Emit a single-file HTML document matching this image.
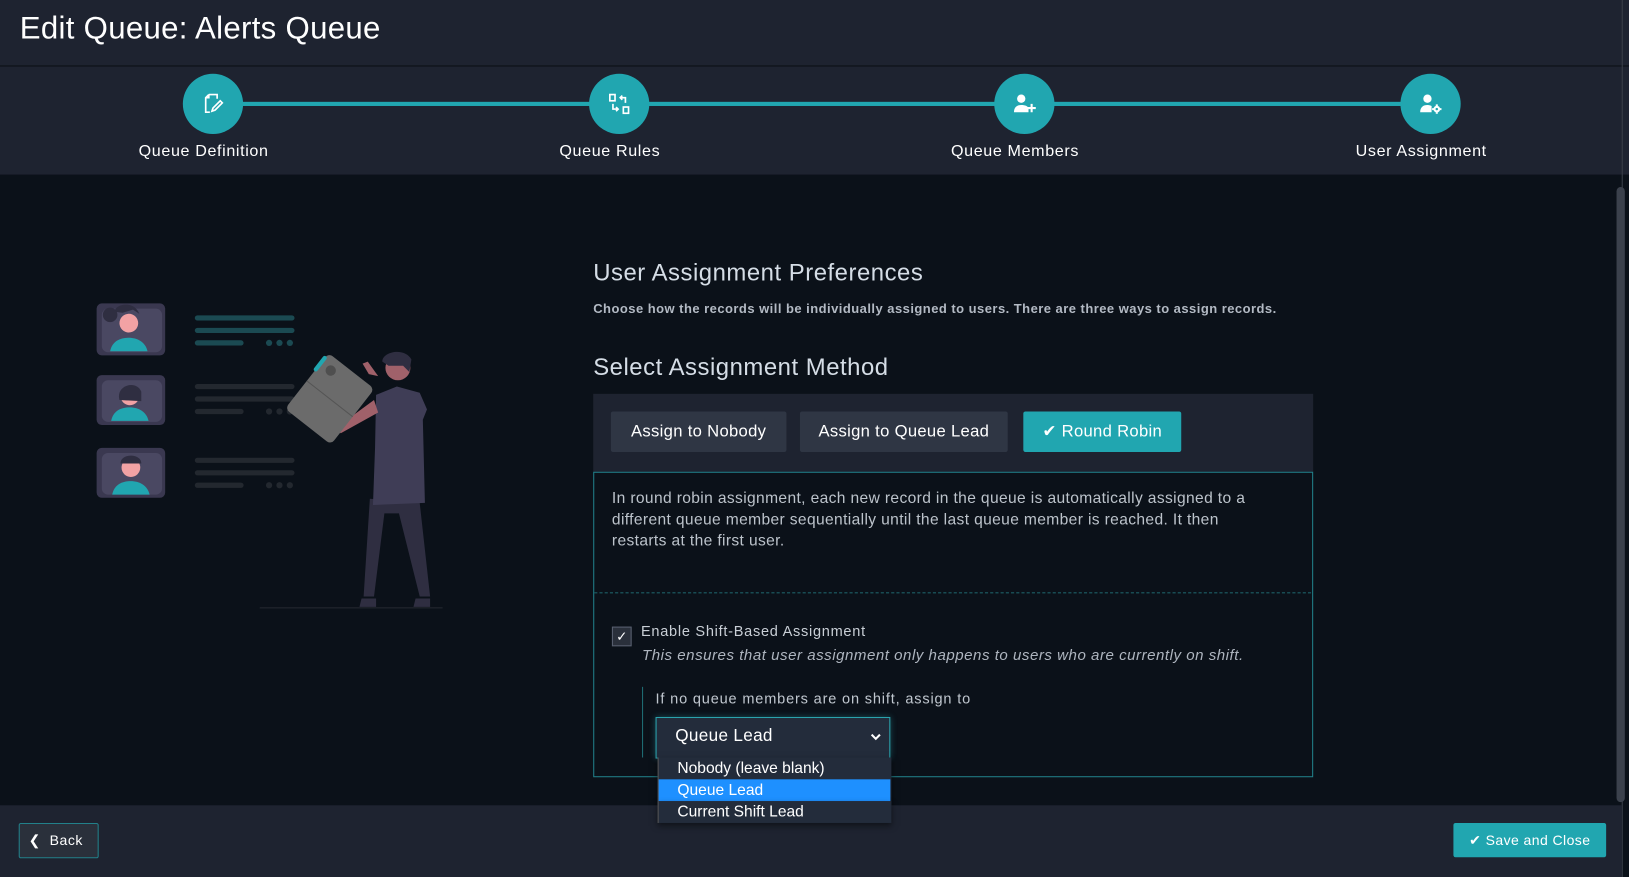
<!DOCTYPE html>
<html><head><meta charset="utf-8"><style>
html,body{margin:0;padding:0;background:#0b1119;overflow:hidden;}
body{width:1629px;height:877px;font-family:"Liberation Sans",sans-serif;}
#w{position:absolute;left:0;top:0;width:1568px;height:844px;transform:scale(1.0389,1.0391);transform-origin:0 0;background:#0b1119;}
.a{position:absolute;white-space:nowrap;}
.circ{position:absolute;width:58px;height:58px;border-radius:50%;background:#21a6b0;top:71px;}
.circ svg{position:absolute;left:17px;top:17px;}
.lbl{position:absolute;top:137px;font-size:15.5px;letter-spacing:.6px;color:#fff;transform:translateX(-50%);}
.btn{position:absolute;top:396px;height:39px;line-height:39px;background:#2f3644;color:#fff;font-size:16px;letter-spacing:.3px;text-align:center;border-radius:2px;}
</style></head><body><div id="w">
<div class="a" style="left:0;top:0;width:1568px;height:63px;background:#1e2330;border-bottom:1px solid #0b0e14;"></div>
<div class="a" style="left:19px;top:11px;font-size:30px;letter-spacing:.3px;color:#fff;">Edit Queue: Alerts Queue</div>
<div class="a" style="left:0;top:64px;width:1568px;height:104px;background:#1e2330;"></div>
<div class="a" style="left:205px;top:98px;width:1172px;height:4px;background:#21a6b0;"></div>
<div class="circ" style="left:176px"><svg width="24" height="24" viewBox="0 0 24 24" fill="none" stroke="#fff" stroke-width="1.6"><path d="M8 3h8v4M8 3L5 6v14h4M5 6h3V3"/><path d="M11 19l1-3 7-7 2 2-7 7z"/></svg></div>
<div class="circ" style="left:567px"><svg width="24" height="24" viewBox="0 0 24 24" fill="none" stroke="#fff" stroke-width="1.6"><rect x="3" y="3" width="5" height="6"/><rect x="16" y="15" width="5" height="6"/><path d="M18 11V6h-5M15 4l-2 2 2 2M6 12v5h5M9 15l2 2-2 2"/></svg></div>
<div class="circ" style="left:957px"><svg width="24" height="24" viewBox="0 0 24 24" fill="#fff"><circle cx="9" cy="7" r="4"/><path d="M2 20c0-5 3-7 7-7s6 1 7 3v4z"/><path d="M18 12h2v3h3v2h-3v3h-2v-3h-3v-2h3z"/></svg></div>
<div class="circ" style="left:1348px"><svg width="24" height="24" viewBox="0 0 24 24" fill="#fff"><circle cx="9" cy="7" r="4"/><path d="M2 20c0-5 3-7 7-7 2 0 3 .5 4 1v6z"/><circle cx="18" cy="17" r="3.2"/><circle cx="18" cy="17" r="1.2" fill="#21a6b0"/><path d="M17 12.5h2v1.5h-2zM17 20h2v1.5h-2zM13.5 16h1.5v2h-1.5zM21 16h1.5v2H21z"/></svg></div>
<div class="lbl" style="left:196px">Queue Definition</div>
<div class="lbl" style="left:587px">Queue Rules</div>
<div class="lbl" style="left:977px">Queue Members</div>
<div class="lbl" style="left:1368px">User Assignment</div>

<div class="a" style="left:1561px;top:0;width:1px;height:844px;background:#3a3f49;"></div>
<div class="a" style="left:1556px;top:180px;width:8px;height:592px;background:#3b414c;border-radius:4px;"></div>

<svg class="a" style="left:0;top:168px" width="560" height="607" viewBox="0 168 560 607">
<g>
<rect x="93" y="292" width="66" height="50" rx="5" fill="#3a3850"/><rect x="98" y="297" width="58" height="42" rx="6" fill="#4a4862"/>
<circle cx="124" cy="311" r="9" fill="#f2a2a4"/><path d="M110 300c2-9 20-10 24 2l-6-4-10 3z" fill="#2f2e41"/><circle cx="106" cy="303" r="7" fill="#2f2e41"/><path d="M106 338c2-10 10-13 18-13s16 4 18 13z" fill="#21a6b0"/>
<rect x="93" y="361" width="66" height="48" rx="5" fill="#3a3850"/><rect x="98" y="366" width="58" height="40" rx="6" fill="#4a4862"/>
<circle cx="125" cy="381" r="9" fill="#f2a2a4"/><path d="M115 385c-4-14 16-20 21-8v9z" fill="#2f2e41"/><path d="M107 405c2-10 10-13 18-13s16 4 18 13z" fill="#21a6b0"/>
<rect x="93" y="431" width="66" height="48" rx="5" fill="#3a3850"/><rect x="98" y="436" width="58" height="40" rx="6" fill="#4a4862"/>
<circle cx="126" cy="450" r="9" fill="#f2a2a4"/><path d="M116 446c0-10 20-10 20 0z" fill="#2f2e41"/><path d="M108 476c2-10 10-13 18-13s16 4 18 13z" fill="#21a6b0"/>
</g>
<g stroke-linecap="round" stroke-width="5">
<path d="M190 306h91M190 318h91M190 330h42" stroke="#1b4a52"/><g fill="#1b4a52"><circle cx="259" cy="330" r="3"/><circle cx="269" cy="330" r="3"/><circle cx="279" cy="330" r="3"/></g>
<path d="M190 372h91M190 384h91M190 396h42" stroke="#23282f"/><g fill="#23282f"><circle cx="259" cy="396" r="3"/><circle cx="269" cy="396" r="3"/><circle cx="279" cy="396" r="3"/></g>
<path d="M190 443h91M190 455h91M190 467h42" stroke="#23282f"/><g fill="#23282f"><circle cx="259" cy="467" r="3"/><circle cx="269" cy="467" r="3"/><circle cx="279" cy="467" r="3"/></g>
</g>
<path d="M250 585h176" stroke="#262b33" stroke-width="1"/>
<path d="M356 480l-6 94h10l10-80 14 0 20 80h10l-10-90z" fill="#2f2e41"/>
<path d="M348 576h14v8h-16zM400 576h14v8h-16z" fill="#2f2e41"/>
<path d="M362 380l20-8 22 6 7 16-4 10 2 80-50 2 2-55z" fill="#3f3d56"/>
<path d="M360 385l-30 22-6 6 4 4 36-20z" fill="#a0616a"/>
<path d="M355 360l-6 -10 5-2 10 14z" fill="#a0616a"/>
<circle cx="383" cy="354" r="12" fill="#a0616a"/><path d="M368 348c0-10 22-14 28-2l-2 12-6-6-14 0z" fill="#2f2e41"/>
<g transform="rotate(38 318 383)"><rect x="290" y="350" width="56" height="68" rx="5" fill="#6b6b6b"/><path d="M290 384h56" stroke="#555" stroke-width="1"/><circle cx="302" cy="362" r="5" fill="#4f4f4f"/><rect x="288" y="354" width="4" height="18" rx="2" fill="#21a6b0"/></g>
</svg>

<div class="a" style="left:571px;top:249px;font-size:23px;letter-spacing:.5px;color:#d5dde6;">User Assignment Preferences</div>
<div class="a" style="left:571px;top:290px;font-size:12.5px;color:#b3bac4;font-weight:bold;letter-spacing:.45px;">Choose how the records will be individually assigned to users. There are three ways to assign records.</div>
<div class="a" style="left:571px;top:340px;font-size:23px;letter-spacing:.5px;color:#d5dde6;">Select Assignment Method</div>
<div class="a" style="left:571px;top:379px;width:693px;height:75px;background:#1e2330;"></div>
<div class="btn" style="left:588px;width:169px;">Assign to Nobody</div>
<div class="btn" style="left:770px;width:200px;">Assign to Queue Lead</div>
<div class="btn" style="left:985px;width:152px;background:#21a6b0;">✔ Round Robin</div>
<div class="a" style="left:571px;top:454px;width:691px;height:292px;border:1px solid #22808a;"></div>
<div class="a" style="left:589px;top:470px;font-size:15px;letter-spacing:.35px;line-height:20.7px;color:#bcc3cb;white-space:normal;width:636px;">In round robin assignment, each new record in the queue is automatically assigned to a different queue member sequentially until the last queue member is reached. It then restarts at the first user.</div>
<div class="a" style="left:572px;top:570px;width:690px;border-top:1px dashed #1d5f66;"></div>
<div class="a" style="left:589px;top:603px;width:17px;height:17px;background:#2a303b;border:1px solid #596070;color:#fff;font-size:13px;line-height:17px;text-align:center;">✓</div>
<div class="a" style="left:617px;top:599px;font-size:14px;letter-spacing:.7px;color:#c9cfd6;">Enable Shift-Based Assignment</div>
<div class="a" style="left:618px;top:623px;font-size:14.5px;letter-spacing:.5px;color:#aeb5bf;font-style:italic;">This ensures that user assignment only happens to users who are currently on shift.</div>
<div class="a" style="left:618px;top:661px;width:1px;height:68px;background:#1f6e75;"></div>
<div class="a" style="left:631px;top:664px;font-size:14px;letter-spacing:.8px;color:#c0c7cf;">If no queue members are on shift, assign to</div>
<div class="a" style="left:631px;top:690px;width:224px;height:38px;background:#232c3b;border:1px solid #2aa3ad;box-shadow:0 0 6px rgba(42,163,173,.4);"></div>
<div class="a" style="left:650px;top:699px;font-size:16.5px;letter-spacing:.3px;color:#fff;">Queue Lead</div>
<svg class="a" style="left:837px;top:704px" width="12" height="10" viewBox="0 0 12 10"><path d="M2 3l4 4 4-4" stroke="#fff" stroke-width="2" fill="none"/></svg>
<div class="a" style="left:633px;top:729px;width:224px;height:63px;background:#232c3b;border-left:1px solid #555;box-shadow:0 3px 6px rgba(0,0,0,.5);"></div>
<div class="a" style="left:634px;top:750px;width:223px;height:21px;background:#1e90ff;"></div>
<div class="a" style="left:652px;top:730px;font-size:15px;color:#fff;line-height:20px;">Nobody (leave blank)</div>
<div class="a" style="left:652px;top:751px;font-size:15px;color:#fff;line-height:20px;">Queue Lead</div>

<div class="a" style="left:0;top:775px;width:1561px;height:69px;background:#1e2330;"></div>
<div class="a" style="left:633px;top:771px;width:224px;height:21px;background:#232c3b;border-left:1px solid #555;box-shadow:0 3px 6px rgba(0,0,0,.5);"></div>
<div class="a" style="left:652px;top:772px;font-size:15px;color:#fff;line-height:20px;">Current Shift Lead</div>
<div class="a" style="left:18px;top:792px;width:75px;height:32px;border:1px solid #22808a;background:#2a303b;border-radius:2px;color:#fff;font-size:13.5px;letter-spacing:.5px;line-height:32px;">&nbsp;&nbsp;❮&nbsp;&nbsp;Back</div>
<div class="a" style="left:1399px;top:792px;width:147px;height:33px;background:#21a6b0;border-radius:2px;color:#fff;font-size:13.5px;letter-spacing:.4px;line-height:33px;text-align:center;">✔ Save and Close</div>
</div></body></html>
